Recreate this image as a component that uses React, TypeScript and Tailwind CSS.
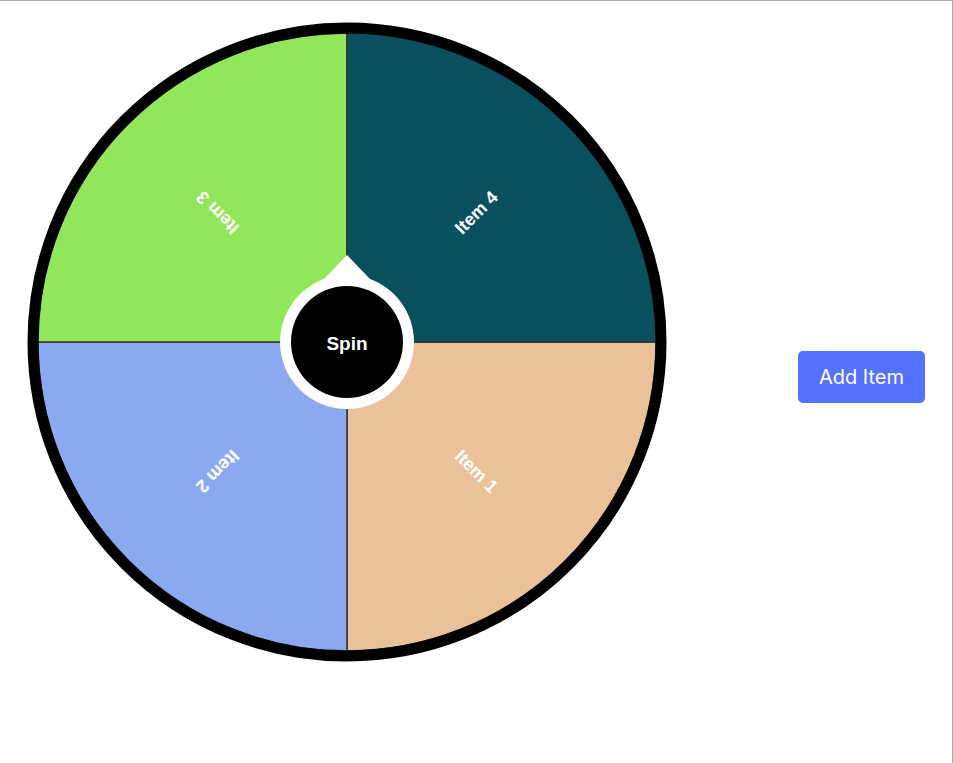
const items = [
  { label: 'Item 1', color: '#EAC199', angle: 45 },
  { label: 'Item 2', color: '#8BA9F1', angle: 135 },
  { label: 'Item 3', color: '#92E65A', angle: 225 },
  { label: 'Item 4', color: '#08505E', angle: 315 },
];

const C = 320;
const R = 309;

function sectorPath(start: number, end: number) {
  const a1 = (start * Math.PI) / 180;
  const a2 = (end * Math.PI) / 180;
  const x1 = C + R * Math.cos(a1);
  const y1 = C + R * Math.sin(a1);
  const x2 = C + R * Math.cos(a2);
  const y2 = C + R * Math.sin(a2);
  return `M${C},${C} L${x1},${y1} A${R},${R} 0 0 1 ${x2},${y2} Z`;
}

const Wheel = () => (
  <svg width="640" height="640" viewBox="0 0 640 640">
    {items.map((item, i) => (
      <path
        key={item.label}
        d={sectorPath(i * 90, i * 90 + 90)}
        fill={item.color}
        stroke="#333"
        strokeWidth="1.5"
      />
    ))}
    {items.map((item) => {
      const a = (item.angle * Math.PI) / 180;
      const x = C + 183 * Math.cos(a);
      const y = C + 183 * Math.sin(a);
      return (
        <text
          key={item.label}
          x={x}
          y={y}
          fill="#fff"
          fontSize="18"
          fontWeight="700"
          fontFamily="'Liberation Sans', Arial, sans-serif"
          textAnchor="middle"
          dominantBaseline="central"
          transform={`rotate(${item.angle} ${x} ${y})`}
        >
          {item.label}
        </text>
      );
    })}
    <circle cx={C} cy={C} r={314} fill="none" stroke="#000" strokeWidth="11" />
    <path
      d="M320,233 L342,256 Q348,262 354,266 L286,266 Q292,262 298,256 Z"
      fill="#fff"
    />
    <circle cx={C} cy={C} r={67} fill="#fff" />
    <circle cx={C} cy={C} r={56} fill="#000" />
    <text
      x={C}
      y={C + 1}
      fill="#fff"
      fontSize="19"
      fontWeight="700"
      fontFamily="'Liberation Sans', Arial, sans-serif"
      textAnchor="middle"
      dominantBaseline="central"
    >
      Spin
    </text>
  </svg>
);

export default function App() {
  return (
    <div className="h-screen w-full border-t border-r border-[#a8a8a8] bg-white">
      <div className="flex items-start pl-[27px] pt-[21px]">
        <Wheel />
        <button className="ml-[131px] mt-[329px] h-[52px] w-[127px] rounded-[5px] bg-[#5471FF] text-[20px] text-white font-['Inter',sans-serif]">
          Add Item
        </button>
      </div>
    </div>
  );
}
